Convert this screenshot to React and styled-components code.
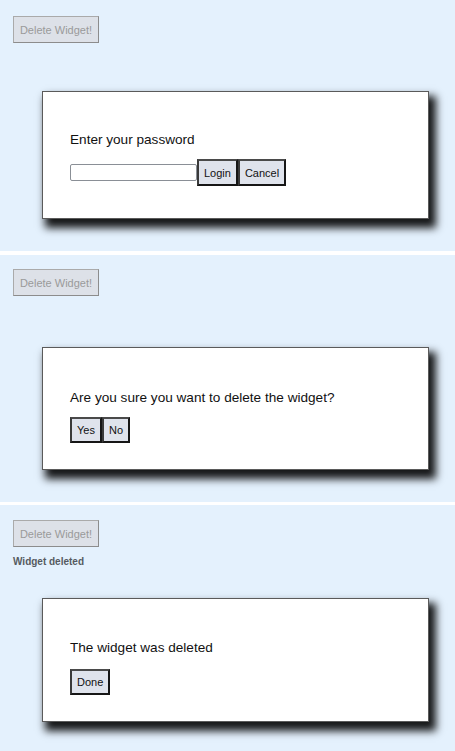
import React from 'react'
import styled, { createGlobalStyle } from 'styled-components'

const GlobalStyle = createGlobalStyle`
    html, body {
        margin: 0;
        padding: 0;
        background: #ffffff;
        font-family: "Liberation Sans", Arial, sans-serif;
    }
`

const Page = styled.main`
    width: 455px;
    height: 751px;
    display: flex;
    flex-direction: column;
    overflow: hidden;
`

const Divider = styled.div`
    flex: none;
    height: ${({ h }) => h}px;
`

const Panel = styled.section`
    box-sizing: border-box;
    height: ${({ h }) => h}px;
    padding: ${({ top }) => top}px 26px 0 13px;
    background: #e4f1fd;
    display: flex;
    flex-direction: column;
`

const Header = styled.div`
    height: ${({ h }) => h}px;
    display: flex;
    flex-direction: column;
    align-items: flex-start;
    gap: 9px;
`

const DeleteButton = styled.button`
    box-sizing: border-box;
    width: 86px;
    height: 27px;
    padding: 0;
    font-family: "Liberation Sans", Arial, sans-serif;
    font-size: 11px;
    color: #9a9a9a;
    background: #dde1e8;
    border: 1.5px solid;
    border-color: #aaaaaa #8c8c8c #8c8c8c #aaaaaa;
    border-radius: 0;
`

const Status = styled.p`
    margin: 0;
    font-size: 10px;
    font-weight: bold;
    color: #555a60;
`

const Modal = styled.div`
    box-sizing: border-box;
    margin-left: 29px;
    width: 387px;
    min-height: ${({ h }) => h}px;
    padding: ${({ pt }) => pt}px 27px 0;
    background: #ffffff;
    border: 1px solid #5a5a5a;
    box-shadow: 5px 7px 8px 2px rgba(0, 0, 0, 0.9);
    display: flex;
    flex-direction: column;
    align-items: flex-start;
    gap: ${({ gap }) => gap}px;
`

const Message = styled.p`
    margin: 0;
    font-size: 13.6px;
    line-height: 16px;
    color: #111111;
`

const Row = styled.div`
    display: flex;
    align-items: center;
`

const PasswordInput = styled.input`
    box-sizing: border-box;
    width: 127px;
    height: 17px;
    padding: 0 3px;
    border: 1px solid #8a8f96;
    border-radius: 2px;
    background: #ffffff;
`

const ActionButton = styled.button`
    box-sizing: border-box;
    height: ${({ h }) => h || 26}px;
    padding: 0 5px;
    font-family: "Liberation Sans", Arial, sans-serif;
    font-size: 11px;
    color: #111111;
    background: #dfe3ec;
    border: 2px solid;
    border-color: #4a4a4a #161616 #161616 #3a3a3a;
    border-radius: 0;
`

export default function App() {
    return (
        <>
            <GlobalStyle />
            <Page>
                <Panel h={251} top={16}>
                    <Header h={75}>
                        <DeleteButton disabled>Delete Widget!</DeleteButton>
                    </Header>
                    <Modal h={128} pt={40} gap={11}>
                        <Message>Enter your password</Message>
                        <Row>
                            <PasswordInput type="password" />
                            <ActionButton h={27}>Login</ActionButton>
                            <ActionButton h={27}>Cancel</ActionButton>
                        </Row>
                    </Modal>
                </Panel>
                <Divider h={4} />
                <Panel h={247} top={14}>
                    <Header h={78}>
                        <DeleteButton disabled>Delete Widget!</DeleteButton>
                    </Header>
                    <Modal h={123} pt={42} gap={11}>
                        <Message>Are you sure you want to delete the widget?</Message>
                        <Row>
                            <ActionButton>Yes</ActionButton>
                            <ActionButton>No</ActionButton>
                        </Row>
                    </Modal>
                </Panel>
                <Divider h={3} />
                <Panel h={246} top={15}>
                    <Header h={78}>
                        <DeleteButton disabled>Delete Widget!</DeleteButton>
                        <Status>Widget deleted</Status>
                    </Header>
                    <Modal h={124} pt={41} gap={13}>
                        <Message>The widget was deleted</Message>
                        <Row>
                            <ActionButton>Done</ActionButton>
                        </Row>
                    </Modal>
                </Panel>
            </Page>
        </>
    )
}
